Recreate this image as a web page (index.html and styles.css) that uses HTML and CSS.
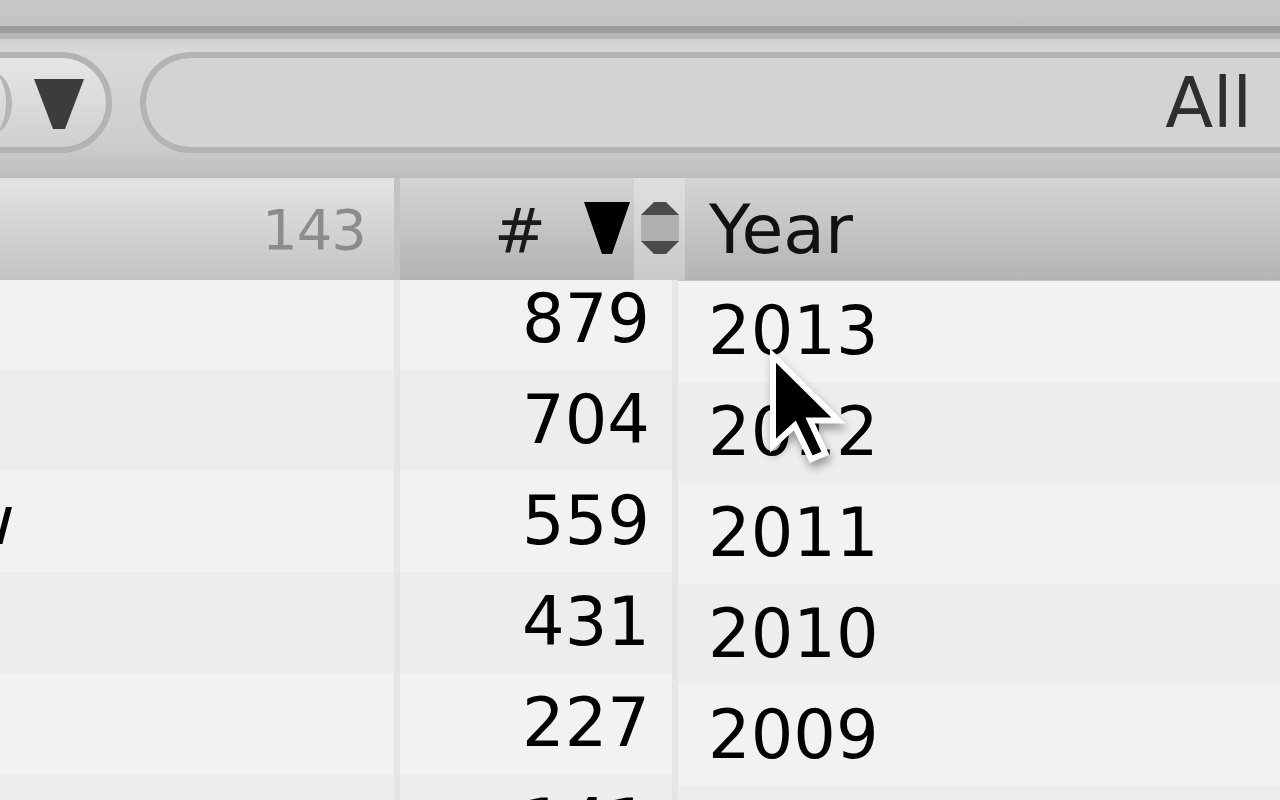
FILE: index.html
```html
<!DOCTYPE html>
<html lang="en">
<head>
    <meta charset="UTF-8">
    <title>Library</title>
    <link rel="stylesheet" href="styles.css">
</head>
<body>
    <div class="window">
        <div class="titlebar"></div>
        <div class="titlebar-edge"></div>
        <div class="toolbar">
            <div class="seg">
                <div class="seg-left"></div>
                <div class="seg-right">
                    <svg width="50" height="50" viewBox="0 0 50 50"><polygon points="0,0 50,0 31,50 19,50" fill="#3c3c3c"/></svg>
                </div>
            </div>
            <div class="search"><span>All</span></div>
        </div>
        <div class="header">
            <div class="h-title">143</div>
            <div class="h-sep"></div>
            <div class="h-num">
                <span class="hash">#</span>
                <svg class="sort" width="46" height="52" viewBox="0 0 46 52"><polygon points="0,0 46,0 28,52 18,52" fill="#000"/></svg>
            </div>
            <div class="h-handle">
                <svg width="38" height="52" viewBox="0 0 38 52">
                    <rect x="0" y="13" width="38" height="26" fill="#b0b0b0"/>
                    <polygon points="13,0 25,0 38,13 0,13" fill="#4a4a4a"/>
                    <polygon points="0,39 38,39 25,52 13,52" fill="#4a4a4a"/>
                </svg>
            </div>
            <div class="h-year">Year</div>
        </div>
        <div class="body">
            <div class="col col-title">
                <div class="cell"></div>
                <div class="cell"></div>
                <div class="cell"><span class="clip">w</span></div>
                <div class="cell"></div>
                <div class="cell"></div>
                <div class="cell"></div>
            </div>
            <div class="col-sep"></div>
            <div class="col col-num">
                <div class="cell">879</div>
                <div class="cell">704</div>
                <div class="cell">559</div>
                <div class="cell">431</div>
                <div class="cell">227</div>
                <div class="cell">141</div>
            </div>
            <div class="col-sep"></div>
            <div class="col col-year">
                <div class="cell">2013</div>
                <div class="cell">2012</div>
                <div class="cell">2011</div>
                <div class="cell">2010</div>
                <div class="cell">2009</div>
                <div class="cell">2008</div>
            </div>
        </div>
        <!-- mouse pointer over the Year column -->
        <svg class="cursor" width="80" height="120" viewBox="-1.2 -1.2 14.5 22">
            <path d="M0,0 L0,16.5 L4,12.8 L7,19 L9.6,17.9 L6.8,11.9 L12,11.9 Z" fill="#000" stroke="#fff" stroke-width="1.1" stroke-linejoin="miter"/>
        </svg>
    </div>
</body>
</html>
```

FILE: styles.css
```css
body {
    margin: 0;
    padding: 0;
    background-color: #c4c4c4;
    font-family: "DejaVu Sans", Verdana, sans-serif;
    color: #000;
}
.window {
    position: relative;
    width: 1280px;
    height: 800px;
    overflow: hidden;
    display: flex;
    flex-direction: column;
}
.titlebar {
    height: 26px;
    flex-shrink: 0;
    background: linear-gradient(to bottom, #c9c9c9, #c2c2c2);
}
.titlebar-edge {
    height: 7px;
    flex-shrink: 0;
    background-color: #9c9c9c;
}
.toolbar {
    height: 145px;
    flex-shrink: 0;
    box-sizing: border-box;
    padding-top: 19px;
    display: flex;
    align-items: flex-start;
    gap: 28px;
    background: linear-gradient(to bottom, #b6b6b6 0, #b6b6b6 6px, #cfcfcf 6px, #d3d3d3 12px, #d9d9d9 19px, #cdcdcd 110px, #bcbcbc 145px);
}
.seg {
    width: 272px;
    height: 101px;
    margin-left: -160px;
    flex-shrink: 0;
    box-sizing: border-box;
    border: 6px solid #b3b3b3;
    border-radius: 51px;
    background: linear-gradient(to bottom, #e5e5e5, #d0d0d0);
    display: flex;
    align-items: center;
    overflow: hidden;
}
.seg-left {
    width: 166px;
    height: 64px;
    box-sizing: border-box;
    border-right: 6px solid #b5b5b5;
    border-radius: 0 22px 22px 0 / 0 32px 32px 0;
}
.seg-right {
    flex: 1;
    display: flex;
    justify-content: center;
    align-items: center;
    padding-top: 2px;
}
.seg-right svg {
    display: block;
}
.search {
    flex: 1;
    height: 101px;
    box-sizing: border-box;
    border: 6px solid #b3b3b3;
    border-right: none;
    border-radius: 51px 0 0 51px;
    background-color: #d3d3d3;
    display: flex;
    justify-content: flex-end;
    align-items: center;
    padding-right: 28px;
    font-size: 70px;
    color: #2e2e2e;
}
.header {
    height: 102px;
    flex-shrink: 0;
    display: flex;
    position: relative;
    z-index: 1;
}
.h-title {
    width: 394px;
    box-sizing: border-box;
    padding-right: 28px;
    display: flex;
    justify-content: flex-end;
    align-items: center;
    font-size: 56px;
    letter-spacing: -1px;
    color: #8c8c8c;
    background: linear-gradient(to bottom, #e3e3e3, #c4c4c4);
}
.h-sep {
    width: 6px;
    background-color: #c3c3c3;
}
.h-num {
    width: 234px;
    box-sizing: border-box;
    padding-right: 4px;
    display: flex;
    justify-content: flex-end;
    align-items: center;
    gap: 38px;
    background: linear-gradient(to bottom, #d4d4d4, #b3b3b3);
}
.hash {
    font-size: 62px;
    color: #1a1a1a;
    padding-top: 4px;
}
.sort {
    display: block;
    margin-top: -2px;
}
.h-handle {
    width: 51px;
    box-sizing: border-box;
    padding-left: 7px;
    display: flex;
    align-items: center;
    background: linear-gradient(to bottom, #dfdfdf, #c9c9c9);
}
.h-handle svg {
    display: block;
    margin-top: -2px;
}
.h-year {
    flex: 1;
    box-sizing: border-box;
    padding-left: 24px;
    display: flex;
    align-items: center;
    font-size: 68px;
    color: #111;
    background: linear-gradient(to bottom, #d4d4d4, #b4b4b4);
}
.body {
    flex: 1;
    display: flex;
    overflow: hidden;
}
.col {
    display: flex;
    flex-direction: column;
    flex-shrink: 0;
}
.cell {
    height: 101px;
    flex-shrink: 0;
    line-height: 101px;
    font-size: 67px;
    white-space: nowrap;
    overflow: hidden;
    background-color: #f2f2f2;
}
.cell:nth-child(even) {
    background-color: #ededed;
}
.col-title {
    width: 394px;
    margin-top: -11px;
}
.clip {
    margin-left: -40px;
}
.col-sep {
    width: 6px;
    flex-shrink: 0;
    background-color: #e5e5e5;
}
.col-num {
    width: 272px;
    margin-top: -11px;
}
.col-num .cell {
    text-align: right;
    padding-right: 22px;
}
.col-year {
    flex: 1;
    margin-top: 1px;
}
.col-year .cell {
    padding-left: 30px;
}
.cursor {
    position: absolute;
    left: 766px;
    top: 349px;
    filter: drop-shadow(2px 6px 4px rgba(0, 0, 0, 0.35));
}
```
